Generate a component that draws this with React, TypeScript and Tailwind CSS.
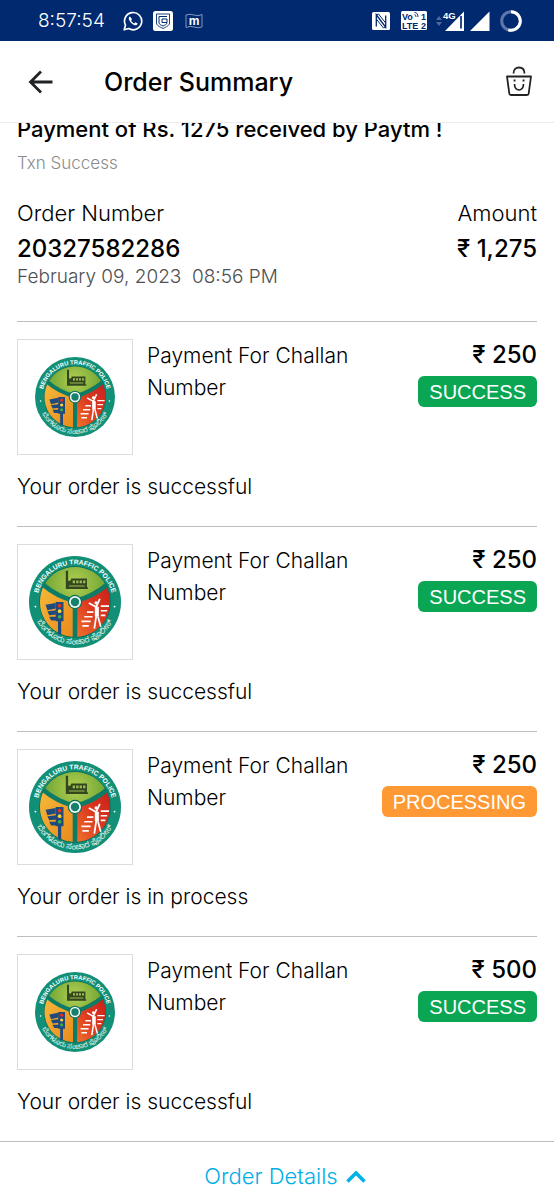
import { useId } from "react";

type Status = "SUCCESS" | "PROCESSING";

interface Item {
  id: number;
  amount: string;
  status: Status;
  note: string;
  large: boolean;
}

const items: Item[] = [
  { id: 1, amount: "250", status: "SUCCESS", note: "Your order is successful", large: false },
  { id: 2, amount: "250", status: "SUCCESS", note: "Your order is successful", large: true },
  { id: 3, amount: "250", status: "PROCESSING", note: "Your order is in process", large: true },
  { id: 4, amount: "500", status: "SUCCESS", note: "Your order is successful", large: false },
];

function Emblem({ className }: { className: string }) {
  const id = useId();
  return (
    <svg viewBox="0 0 100 100" className={className} role="img" aria-label="Bengaluru Traffic Police">
      <defs>
        <radialGradient id={`${id}g`} cx="50" cy="30" r="34" gradientUnits="userSpaceOnUse">
          <stop offset="0" stopColor="#b3cf52" />
          <stop offset="1" stopColor="#6fa534" />
        </radialGradient>
        <linearGradient id={`${id}o`} x1="0" y1="0" x2="1" y2="1">
          <stop offset="0" stopColor="#f6b93a" />
          <stop offset="1" stopColor="#e9891c" />
        </linearGradient>
        <linearGradient id={`${id}r`} x1="0" y1="1" x2="1" y2="0">
          <stop offset="0" stopColor="#f0762c" />
          <stop offset="0.5" stopColor="#dc3a20" />
          <stop offset="1" stopColor="#c8201c" />
        </linearGradient>
        <path id={`${id}t`} d="M9 50a41 41 0 0 1 82 0" />
        <path id={`${id}b`} d="M4 50a46 46 0 0 0 92 0" />
      </defs>
      <circle cx="50" cy="50" r="50" fill="#129077" />
      <circle cx="50" cy="50" r="39" fill="#0b6f5c" />
      <path d="M50 50L17 31A38 38 0 0 1 83 31Z" fill={`url(#${id}g)`} />
      <path d="M50 50L17 31A38 38 0 0 0 50 88Z" fill={`url(#${id}o)`} />
      <path d="M50 50L83 31A38 38 0 0 1 50 88Z" fill={`url(#${id}r)`} />
      <g fill="none" stroke="#0c7c66" strokeWidth="5">
        <path d="M15 31Q30 44 50 49" />
        <path d="M85 31Q70 44 50 49" />
        <path d="M50 50V89" />
      </g>
      <circle cx="50" cy="50" r="7.800" fill="#0b6f5c" />
      <circle cx="50" cy="50" r="6.500" fill="#f1faf6" />
      <circle cx="50" cy="50" r="4.600" fill="#17806c" />
      <g fill="#33471f">
        <path d="M40 16h2.500v11h2.500l1-2.500h17V34h1v2H40z" />
      </g>
      <path d="M47.500 26.500h2.500v3h-2.500zM51.300 26.500h2.500v3h-2.500zM55 26.500h2.500v3h-2.500zM58.800 26.500h2.500v3h-2.500zM43.500 32h17v1.200h-17z" fill="#9dbb50" />
      <g fill="#204a7c">
        <path d="M18 53l11-2v6l-9 2zM20 60l10-1v4.500l-8 1zM22 66h8v4h-6z" />
        <path d="M29 50h8.500v21H29zM31.500 71h3.500v14h-3.500z" />
      </g>
      <circle cx="33.300" cy="54" r="2" fill="#e33224" />
      <circle cx="33.300" cy="60" r="2" fill="#f6d23c" />
      <circle cx="33.300" cy="66" r="2" fill="#3fae49" />
      <g fill="none" stroke="#fff">
        <path d="M65 51l8 4.500 4-9M73 56v10l-2 13M75 66l3 11" strokeWidth="1.900" />
        <path d="M72 55.500h3.500v10H72z" fill="#fff" strokeWidth="0.800" />
        <path d="M78 54.500h9M78 59.500h7M78 64.500h5M63 61h7M60 66h9M57 71h10M58 76h7" strokeWidth="1.800" />
      </g>
      <circle cx="73" cy="51" r="1.800" fill="#fff" />
      <circle cx="7" cy="55" r="1" fill="#fff" />
      <circle cx="93" cy="55" r="1" fill="#fff" />
      <text fill="#fff" fontSize="7.300" fontWeight="700" fontFamily="'Liberation Sans Narrow', 'Liberation Sans', sans-serif" textAnchor="middle">
        <textPath href={`#${id}t`} startOffset="50%">BENGALURU TRAFFIC POLICE</textPath>
      </text>
      <text fill="#e6f5f0" fontSize="8.500" fontFamily="'Noto Sans Kannada', 'Noto Sans', sans-serif" textAnchor="middle">
        <textPath href={`#${id}b`} startOffset="50%">ಬೆಂಗಳೂರು ಸಂಚಾರ ಪೊಲೀಸ್</textPath>
      </text>
    </svg>
  );
}

function StatusBar() {
  return (
    <div className="flex h-[41px] items-center justify-between bg-[#002970] pr-8 pl-[38px] text-white">
      <div className="flex items-center">
        <span className="text-[19px] leading-6 font-light">8:57:54</span>
        <svg viewBox="0 0 20 20" className="ml-[18px] size-5" fill="none" stroke="#fff" aria-hidden="true">
          <path d="M1.200 18.800l1.300-4.700A8.600 8.600 0 1 1 5.700 17.500z" strokeWidth="1.700" strokeLinejoin="round" />
          <path d="M7 5.500c-1.200.6-1.500 1.800-1 3.100 1 2.700 3 4.700 5.700 5.600 1.500.4 2.700-.3 2.900-1.700l-2.200-1.200-1.200 1.200c-1.300-.5-2.500-1.700-3.100-3L9 8.200z" fill="#fff" stroke="none" />
        </svg>
        <svg viewBox="0 0 20 20" className="ml-2.5 size-5" fill="none" aria-hidden="true">
          <rect width="20" height="20" rx="2.500" fill="#fff" />
          <path d="M3.500 3h13v9c0 2.500-3.500 4-6.500 5.500C7 16 3.500 14.500 3.500 12z" stroke="#002970" strokeWidth="0.900" />
          <path d="M14 5.500H6v6.300c0 1.500 2 2.200 4 3.200 2-1 4-1.700 4-3.200M14 8H9v3.500h5V8" stroke="#002970" strokeWidth="1" />
        </svg>
        <svg viewBox="0 0 18 16" className="ml-3 h-4 w-[18px]" fill="none" aria-hidden="true">
          <path d="M1 2q4-1.500 8 0t8-.5v12.500q-4 1.500-8 0t-8 .5z" stroke="#8fa3c8" strokeWidth="0.900" />
          <text x="9" y="11.500" textAnchor="middle" fontSize="12" fontWeight="700" fill="#fff" fontFamily="'Liberation Sans', sans-serif">m</text>
        </svg>
      </div>
      <div className="flex items-center">
        <svg viewBox="0 0 18 18" className="size-[18px]" aria-hidden="true">
          <rect width="18" height="18" rx="1.500" fill="#fff" />
          <path d="M4.300 14.500V2.800L13.700 15.200V3.500" fill="none" stroke="#002970" strokeWidth="1.300" />
          <path d="M4.300 2.800L6.500 2l7.200 9M4.300 7l7.200 9 2.200-.8" fill="none" stroke="#002970" strokeWidth="1" />
        </svg>
        <svg viewBox="0 0 26 19" className="ml-[11px] h-[19px] w-[26px]" aria-hidden="true">
          <rect width="26" height="19" rx="1.500" fill="#fff" />
          <g fill="#002970" fontFamily="'Liberation Sans', sans-serif" fontWeight="700" fontSize="9">
            <text x="1" y="8.500">Vo</text>
            <text x="1" y="17.500">LTE</text>
            <text x="20" y="8.500">1</text>
            <text x="20" y="17.500">2</text>
          </g>
          <path d="M13.500 3.500q1.500 0 1.500 2.500M13.500 1.500q3.500 0 3.500 4.500" fill="none" stroke="#002970" strokeWidth="0.900" />
        </svg>
        <svg viewBox="0 0 30 20" className="ml-2 h-5 w-[30px]" aria-hidden="true">
          <path d="M1 9l3-4 3 4zM1 11l3 4 3-4z" fill="#53699a" />
          <path d="M29 0.500V20H10z" fill="#fff" />
          <path d="M26 5v12.500" stroke="#002970" strokeWidth="1.700" />
          <path d="M7 0h14.500v7.500l-3 1.500H7z" fill="#002970" />
          <text x="8" y="8" fontSize="9.500" fontWeight="700" fill="#fff" fontFamily="'Liberation Sans', sans-serif">4G</text>
        </svg>
        <svg viewBox="0 0 20 20" className="ml-[5px] size-5" aria-hidden="true">
          <path d="M19.500 0.500V20H0z" fill="#fff" />
        </svg>
        <svg viewBox="0 0 22 22" className="ml-2.5 size-[22px]" fill="none" strokeWidth="3" aria-hidden="true">
          <circle cx="11" cy="11" r="9.300" stroke="#5f78a8" />
          <path d="M11 1.700A9.300 9.300 0 1 1 8.300 19.900" stroke="#fff" />
        </svg>
      </div>
    </div>
  );
}

function Header() {
  return (
    <header className="relative z-10 flex h-[82px] items-center border-b border-[#ececec] bg-white pr-[21px] pl-7">
      <button type="button" aria-label="Back">
        <svg viewBox="0 0 26 24" className="h-6 w-[26px]" fill="none" stroke="#202224" strokeWidth="2.800" aria-hidden="true">
          <path d="M24.500 12H3M13 1.500L2.500 12 13 22.500" />
        </svg>
      </button>
      <h1 className="ml-[50px] flex-1 text-[25px] leading-8 font-medium">Order Summary</h1>
      <button type="button" aria-label="Bag">
        <svg viewBox="0 0 28 32" className="h-8 w-7" fill="none" stroke="#202224" strokeWidth="1.800" strokeLinejoin="round" aria-hidden="true">
          <path d="M2 10.500h24l-2.300 17q-.2 1.500-1.700 1.500H6q-1.500 0-1.700-1.500z" />
          <path d="M8.500 7.500C8.500 3.500 11 1.500 14 1.500s5.500 2 5.500 6" />
          <path d="M9.500 18c0 8 9 8 9 0" strokeWidth="1.700" />
          <path d="M8.600 14.500h1.900M17.600 14.500h1.900" strokeWidth="1.900" />
        </svg>
      </button>
    </header>
  );
}

function ItemRow({ item }: { item: Item }) {
  return (
    <li className="border-t border-[#bdbdbd] pt-[17px] pb-[23px]">
      <div className="flex">
        <div className="flex size-29 shrink-0 items-center justify-center border border-[#dcdcdc]">
          <Emblem className={item.large ? "size-[92px]" : "size-20"} />
        </div>
        <h2 className="ml-3.5 w-[230px] pt-px text-[21px] leading-8 font-light">Payment For Challan Number</h2>
        <div className="ml-auto flex flex-col items-end">
          <span className="text-[24px] leading-8 font-medium">₹ {item.amount}</span>
          <span
            className={
              "mt-[5px] flex h-[31px] items-center rounded-md px-[11px] font-['Liberation_Sans',Arial,sans-serif] text-[20px] leading-6 text-white " +
              (item.status === "SUCCESS" ? "bg-[#0aa653]" : "bg-[#ff9933]")
            }
          >
            {item.status}
          </span>
        </div>
      </div>
      <p className="mt-4 text-[21px] leading-8 font-light">{item.note}</p>
    </li>
  );
}

export default function App() {
  return (
    <div className="flex min-h-screen flex-col bg-white font-['Inter','Liberation_Sans',sans-serif] text-black">
      <StatusBar />
      <Header />
      <main className="-mt-2.5 flex-1 px-[17px]">
        <section>
          <p className="text-[22px] leading-8 font-medium">Payment of Rs. 1275 received by Paytm !</p>
          <p className="mt-1.5 text-[17px] leading-6 font-light text-[#8c8c8c]">Txn Success</p>
          <dl className="mt-[19px] flex justify-between pb-8">
            <div>
              <dt className="text-[22px] leading-[39px] font-light">Order Number</dt>
              <dd className="text-[24px] leading-8 font-medium">20327582286</dd>
              <dd className="text-[19px] leading-6 font-light whitespace-pre text-[#505050]">February 09, 2023  08:56 PM</dd>
            </div>
            <div className="text-right">
              <dt className="text-[22px] leading-[39px] font-light">Amount</dt>
              <dd className="text-[24px] leading-8 font-medium">₹ 1,275</dd>
            </div>
          </dl>
        </section>
        <ul>
          {items.map((item) => (
            <ItemRow key={item.id} item={item} />
          ))}
        </ul>
      </main>
      <footer className="border-t border-[#bdbdbd] pt-[18px] pb-2 text-center">
        <button type="button" className="inline-flex items-center pl-4 text-[22px] leading-8 font-light text-[#00aee6]">
          Order Details
          <svg viewBox="0 0 20 14" className="ml-2 h-3.5 w-5" fill="none" stroke="#00b3e6" strokeWidth="3.600" aria-hidden="true">
            <path d="M1.500 12.500L10 4l8.500 8.500" />
          </svg>
        </button>
      </footer>
    </div>
  );
}
